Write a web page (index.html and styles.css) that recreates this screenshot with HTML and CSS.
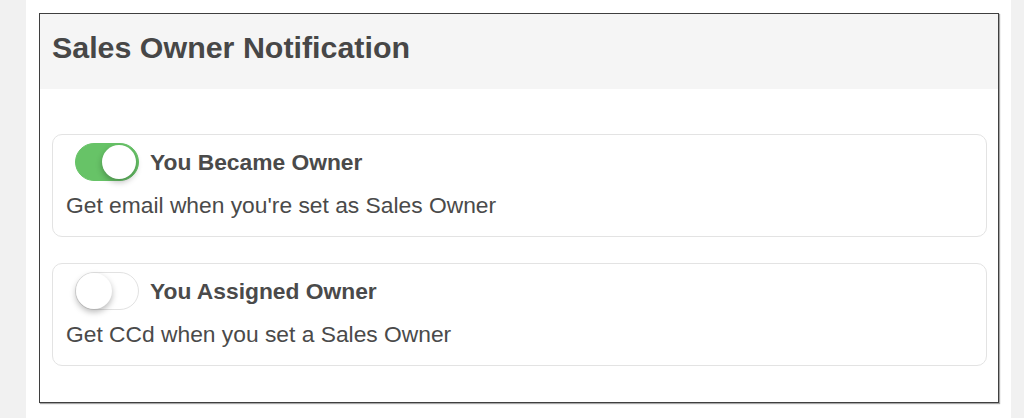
FILE: index.html
```html
<!DOCTYPE html>
<html>
<head>
<meta charset="utf-8">
<link rel="stylesheet" href="styles.css">
</head>
<body>
<div class="page">
  <div class="strip"></div>
  <main class="main">
    <section class="panel">
      <header class="panel-head">
        <h1 class="panel-title">Sales Owner Notification</h1>
      </header>
      <div class="panel-body">
        <div class="card">
          <div class="card-row">
            <span class="toggle toggle-on"><span class="knob"></span></span>
            <span class="card-label">You Became Owner</span>
          </div>
          <p class="card-desc">Get email when you're set as Sales Owner</p>
        </div>
        <div class="card">
          <div class="card-row">
            <span class="toggle"><span class="knob"></span></span>
            <span class="card-label">You Assigned Owner</span>
          </div>
          <p class="card-desc">Get CCd when you set a Sales Owner</p>
        </div>
      </div>
    </section>
  </main>
  <div class="strip strip-right"></div>
</div>
</body>
</html>
```

FILE: styles.css
```css
html, body {
  margin: 0;
  padding: 0;
  background: #f1f1f1;
  font-family: "Liberation Sans", Arial, Helvetica, sans-serif;
  color: #4a4a4a;
}
.page {
  display: flex;
  height: 418px;
}
.strip {
  width: 26px;
  background: #f1f1f1;
}
.strip-right {
  width: 13px;
}
.main {
  flex: 1;
  background: #fff;
  padding: 13px 12px 0 13px;
}
.panel {
  border: 1px solid #3f3f3f;
  box-shadow: 1px 1px 1px rgba(0,0,0,0.35);
  background: #fff;
}
.panel-head {
  background: #f5f5f5;
  height: 75px;
  padding-left: 12px;
  display: flex;
  align-items: center;
}
.panel-title {
  margin: 0;
  font-size: 30.4px;
  font-weight: bold;
  color: #474747;
  position: relative;
  top: -4px;
}
.panel-body {
  padding: 45px 11px 36px 12px;
  display: flex;
  flex-direction: column;
  gap: 26px;
}
.card {
  border: 1px solid #e3e3e3;
  border-radius: 10px;
  padding: 8px 13px 19px;
}
.card-row {
  display: flex;
  align-items: center;
  height: 38px;
}
.toggle {
  position: relative;
  width: 62px;
  height: 36px;
  border-radius: 19px;
  border: 1px solid #e2e2e2;
  background: #fff;
  margin-left: 9px;
  margin-right: 11px;
}
.toggle-on {
  background: #67c367;
  border-color: #67c367;
}
.knob {
  position: absolute;
  top: 0;
  left: 0;
  width: 36px;
  height: 36px;
  border-radius: 50%;
  background: #fff;
  box-shadow: 0 3px 6px rgba(0,0,0,0.28);
}
.toggle-on .knob {
  left: 26px;
  width: 34px;
  height: 34px;
  top: 1px;
}
.card-label {
  font-size: 22.8px;
  font-weight: bold;
  color: #4a4a4a;
}
.card-desc {
  margin: 12px 0 0;
  font-size: 22.8px;
  line-height: 24px;
  color: #4a4a4a;
}
```
